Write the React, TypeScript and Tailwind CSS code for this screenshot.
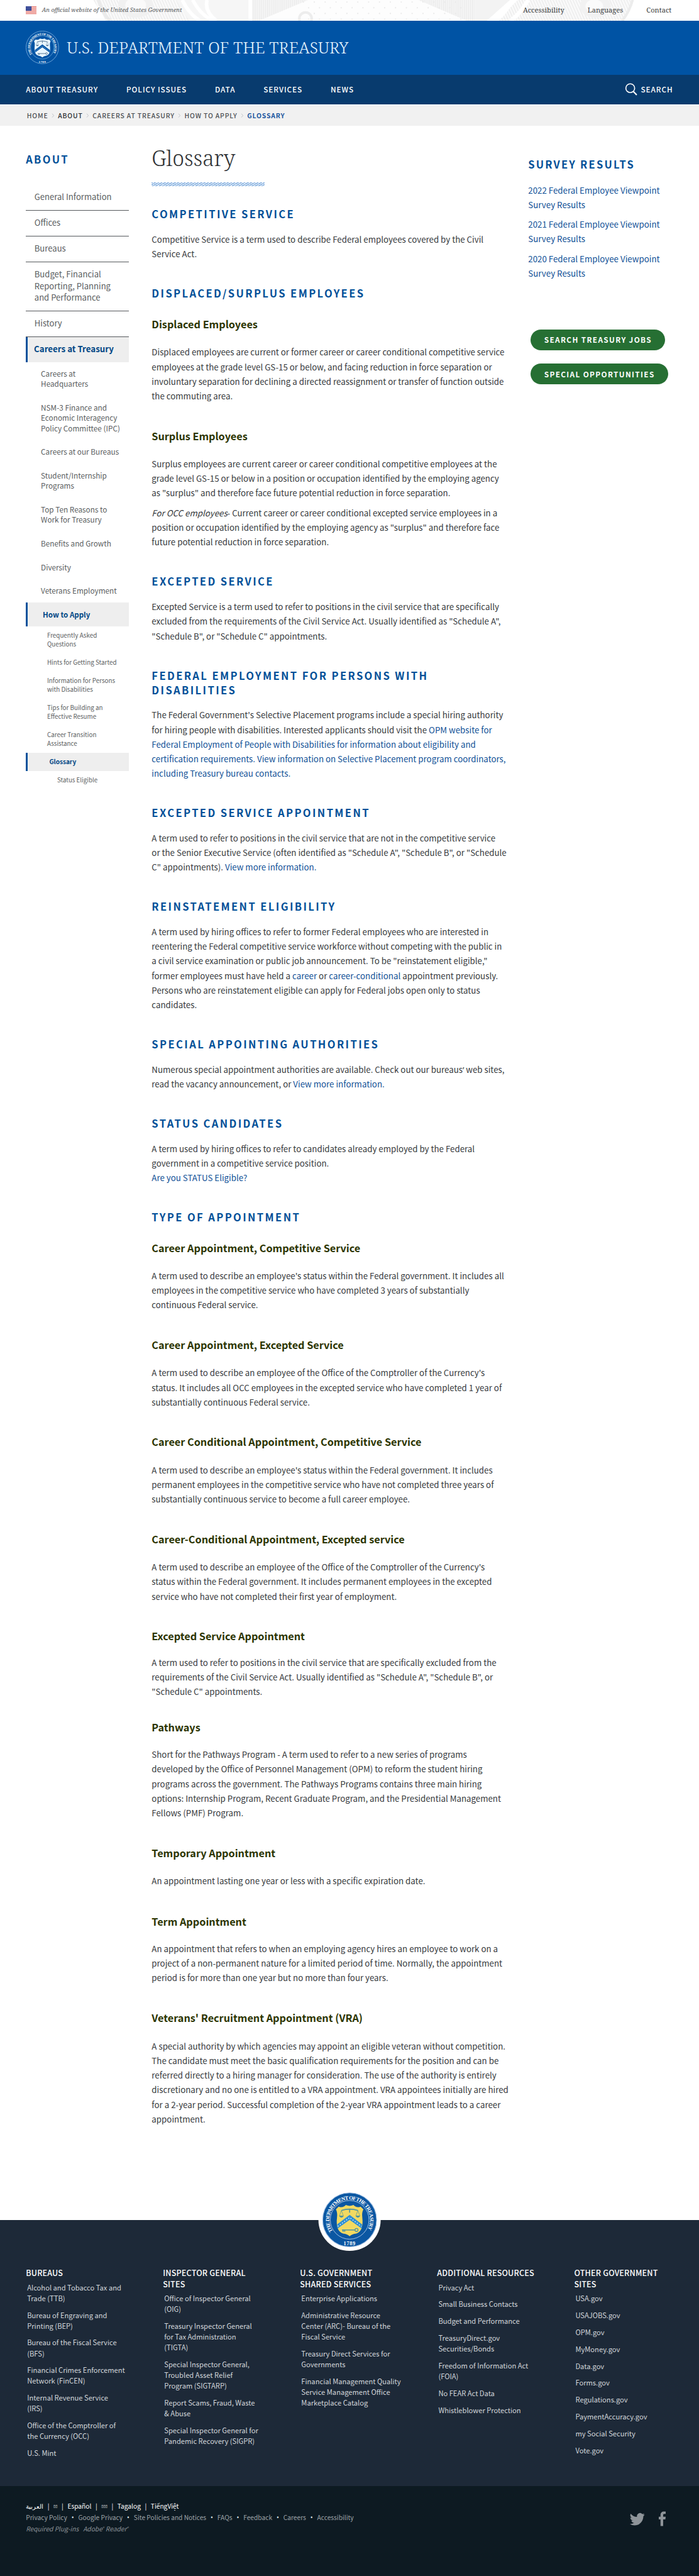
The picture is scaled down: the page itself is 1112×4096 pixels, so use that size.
import { Fragment, type ReactNode } from 'react';

const SERIF = "font-['Noto_Serif','Liberation_Serif',serif]";

function Link({ children }: { children: ReactNode }) {
  return <a className="text-[#0f5096]">{children}</a>;
}

type Block = { kind: 'h2' | 'h3' | 'p'; gap: string; body: ReactNode };

const GAP_P_H2 = 'mt-[48.3px]';
const GAP_H2_P = 'mt-[20.4px]';
const GAP_H2_H3 = 'mt-[33.4px]';
const GAP_H3_P = 'mt-[27.5px]';
const GAP_P_H3 = 'mt-[51.6px]';

const BLOCKS: Block[] = [
  { kind: 'h2', gap: 'mt-[40px]', body: 'Competitive Service' },
  { kind: 'p', gap: GAP_H2_P, body: 'Competitive Service is a term used to describe Federal employees covered by the Civil\nService Act.' },
  { kind: 'h2', gap: GAP_P_H2, body: 'Displaced/Surplus Employees' },
  { kind: 'h3', gap: GAP_H2_H3, body: 'Displaced Employees' },
  { kind: 'p', gap: GAP_H3_P, body: 'Displaced employees are current or former career or career conditional competitive service\nemployees at the grade level GS-15 or below, and facing reduction in force separation or\ninvoluntary separation for declining a directed reassignment or transfer of function outside\nthe commuting area.' },
  { kind: 'h3', gap: GAP_P_H3, body: 'Surplus Employees' },
  { kind: 'p', gap: GAP_H3_P, body: 'Surplus employees are current career or career conditional competitive employees at the\ngrade level GS-15 or below in a position or occupation identified by the employing agency\nas "surplus" and therefore face future potential reduction in force separation.' },
  { kind: 'p', gap: 'mt-[10.4px]', body: <><em>For OCC employees</em>{'- Current career or career conditional excepted service employees in a\nposition or occupation identified by the employing agency as "surplus" and therefore face\nfuture potential reduction in force separation.'}</> },
  { kind: 'h2', gap: GAP_P_H2, body: 'Excepted Service' },
  { kind: 'p', gap: GAP_H2_P, body: 'Excepted Service is a term used to refer to positions in the civil service that are specifically\nexcluded from the requirements of the Civil Service Act. Usually identified as "Schedule A",\n"Schedule B", or "Schedule C" appointments.' },
  { kind: 'h2', gap: GAP_P_H2, body: 'Federal Employment for Persons with\nDisabilities' },
  { kind: 'p', gap: GAP_H2_P, body: <>{"The Federal Government's Selective Placement programs include a special hiring authority\nfor hiring people with disabilities. Interested applicants should visit the "}<Link>{'OPM website for\nFederal Employment of People with Disabilities for information about eligibility and\ncertification requirements.'}</Link> <Link>{'View information on Selective Placement program coordinators,\nincluding Treasury bureau contacts.'}</Link></> },
  { kind: 'h2', gap: GAP_P_H2, body: 'Excepted Service Appointment' },
  { kind: 'p', gap: GAP_H2_P, body: <>{'A term used to refer to positions in the civil service that are not in the competitive service\nor the Senior Executive Service (often identified as "Schedule A", "Schedule B", or "Schedule\nC" appointments). '}<Link>View more information.</Link></> },
  { kind: 'h2', gap: GAP_P_H2, body: 'Reinstatement Eligibility' },
  { kind: 'p', gap: GAP_H2_P, body: <>{'A term used by hiring offices to refer to former Federal employees who are interested in\nreentering the Federal competitive service workforce without competing with the public in\na civil service examination or public job announcement. To be "reinstatement eligible,"\nformer employees must have held a '}<Link>career</Link> or <Link>career-conditional</Link>{' appointment previously.\nPersons who are reinstatement eligible can apply for Federal jobs open only to status\ncandidates.'}</> },
  { kind: 'h2', gap: GAP_P_H2, body: 'Special Appointing Authorities' },
  { kind: 'p', gap: GAP_H2_P, body: <>Numerous special appointment authorities are available. Check out our bureaus<span className="font-['Noto_Sans',sans-serif] leading-none">’</span>{' web sites,\nread the vacancy announcement, or '}<Link>View more information.</Link></> },
  { kind: 'h2', gap: GAP_P_H2, body: 'Status Candidates' },
  { kind: 'p', gap: GAP_H2_P, body: <>{'A term used by hiring offices to refer to candidates already employed by the Federal\ngovernment in a competitive service position.\n'}<Link>Are you STATUS Eligible?</Link></> },
  { kind: 'h2', gap: GAP_P_H2, body: 'Type of Appointment' },
  { kind: 'h3', gap: GAP_H2_H3, body: 'Career Appointment, Competitive Service' },
  { kind: 'p', gap: GAP_H3_P, body: "A term used to describe an employee's status within the Federal government. It includes all\nemployees in the competitive service who have completed 3 years of substantially\ncontinuous Federal service." },
  { kind: 'h3', gap: GAP_P_H3, body: 'Career Appointment, Excepted Service' },
  { kind: 'p', gap: GAP_H3_P, body: "A term used to describe an employee of the Office of the Comptroller of the Currency's\nstatus. It includes all OCC employees in the excepted service who have completed 1 year of\nsubstantially continuous Federal service." },
  { kind: 'h3', gap: GAP_P_H3, body: 'Career Conditional Appointment, Competitive Service' },
  { kind: 'p', gap: GAP_H3_P, body: "A term used to describe an employee's status within the Federal government. It includes\npermanent employees in the competitive service who have not completed three years of\nsubstantially continuous service to become a full career employee." },
  { kind: 'h3', gap: GAP_P_H3, body: 'Career-Conditional Appointment, Excepted service' },
  { kind: 'p', gap: GAP_H3_P, body: "A term used to describe an employee of the Office of the Comptroller of the Currency's\nstatus within the Federal government. It includes permanent employees in the excepted\nservice who have not completed their first year of employment." },
  { kind: 'h3', gap: GAP_P_H3, body: 'Excepted Service Appointment' },
  { kind: 'p', gap: 'mt-[24.2px]', body: 'A term used to refer to positions in the civil service that are specifically excluded from the\nrequirements of the Civil Service Act. Usually identified as "Schedule A", "Schedule B", or\n"Schedule C" appointments.' },
  { kind: 'h3', gap: 'mt-[43px]', body: 'Pathways' },
  { kind: 'p', gap: 'mt-[26.2px]', body: 'Short for the Pathways Program - A term used to refer to a new series of programs\ndeveloped by the Office of Personnel Management (OPM) to reform the student hiring\nprograms across the government. The Pathways Programs contains three main hiring\noptions: Internship Program, Recent Graduate Program, and the Presidential Management\nFellows (PMF) Program.' },
  { kind: 'h3', gap: GAP_P_H3, body: 'Temporary Appointment' },
  { kind: 'p', gap: GAP_H3_P, body: 'An appointment lasting one year or less with a specific expiration date.' },
  { kind: 'h3', gap: 'mt-[52.6px]', body: 'Term Appointment' },
  { kind: 'p', gap: 'mt-[26.5px]', body: 'An appointment that refers to when an employing agency hires an employee to work on a\nproject of a non-permanent nature for a limited period of time. Normally, the appointment\nperiod is for more than one year but no more than four years.' },
  { kind: 'h3', gap: 'mt-[52px]', body: "Veterans' Recruitment Appointment (VRA)" },
  { kind: 'p', gap: GAP_H3_P, body: 'A special authority by which agencies may appoint an eligible veteran without competition.\nThe candidate must meet the basic qualification requirements for the position and can be\nreferred directly to a hiring manager for consideration. The use of the authority is entirely\ndiscretionary and no one is entitled to a VRA appointment. VRA appointees initially are hired\nfor a 2-year period. Successful completion of the 2-year VRA appointment leads to a career\nappointment.' },
];

const BLOCK_STYLE = {
  h2: 'text-[20.1px] leading-[28px] font-bold uppercase tracking-[2.9px] text-[#004f98]',
  h3: 'text-[19.7px] leading-[24px] font-bold text-[#2b3400]',
  p: 'text-[16.15px] leading-[28.12px] text-[#36393c]',
};

function Article() {
  return (
    <article className="whitespace-pre">
      {BLOCKS.map((b, i) => {
        const Tag = b.kind;
        return (
          <Tag key={i} className={`${b.gap} ${BLOCK_STYLE[b.kind]}`}>
            {b.body}
          </Tag>
        );
      })}
    </article>
  );
}

function Flag() {
  return (
    <svg viewBox="0 0 21 15" className="h-[15px] w-[21px]">
      <rect width="21" height="15" fill="#fff" />
      {[0, 1, 2, 3, 4, 5, 6].map((n) => (
        <rect key={n} y={n * 2.3} width="21" height="1.15" fill="#e0584f" />
      ))}
      <rect width="11" height="8.6" fill="#2a3c8e" />
      {[1.5, 4, 6.5, 9].map((x) =>
        [1.5, 4, 6.5].map((y) => <circle key={`${x}-${y}`} cx={x} cy={y} r="0.55" fill="#dfe4f5" />),
      )}
    </svg>
  );
}

/* Faint banknote engraving behind the top strip. */
function Engraving() {
  const dots: ReactNode[] = [];
  for (let r = 0; r < 4; r++)
    for (let c = 0; c < 15; c++)
      dots.push(<circle key={`${r}-${c}`} cx={586 + c * 21 + (r % 2) * 10} cy={4 + r * 11} r="1.3" fill="#e9e9e9" />);
  return (
    <svg viewBox="0 0 1350 40" className="absolute inset-0 h-[40px] w-full">
      <defs>
        <pattern id="vlines" width="4" height="4" patternUnits="userSpaceOnUse">
          <rect width="4" height="4" fill="#f5f5f5" />
          <rect width="1.5" height="4" fill="#ebebeb" />
        </pattern>
        <pattern id="dlines" width="5" height="5" patternUnits="userSpaceOnUse" patternTransform="rotate(-24)">
          <rect width="5" height="5" fill="#fafafa" />
          <rect width="1.8" height="5" fill="#ededed" />
        </pattern>
      </defs>
      <path d="M180 0H345L380 40H205Z" fill="url(#dlines)" />
      <path d="M340 0H480V40H365Z" fill="#f6f6f6" />
      <path d="M352 0q12 26 34 40M372 0q16 30 40 40M400 0q-6 22 18 40" stroke="#fff" strokeWidth="7" fill="none" />
      <ellipse cx="262" cy="10" rx="34" ry="24" fill="#f1f1f1" />
      <ellipse cx="262" cy="10" rx="20" ry="15" fill="#fafafa" />
      <path d="M190 0q6 22 22 40" stroke="#ebebeb" strokeWidth="6" fill="none" />
      <rect x="487" y="0" width="430" height="40" fill="url(#vlines)" />
      <path d="M595 0H808L902 40H500Z" fill="#fdfdfd" />
      {dots}
      <circle cx="590" cy="36" r="12" fill="none" stroke="#ededed" strokeWidth="5" />
      <path d="M917 0H985L940 40H917Z" fill="#f3f3f3" />
      <path d="M1000 0H1225L1200 40H960Z" fill="url(#dlines)" />
      <path d="M990 0q-14 24 -32 40M1020 0q-14 26 -34 40" stroke="#fff" strokeWidth="8" fill="none" />
      <ellipse cx="1150" cy="12" rx="30" ry="22" fill="#f2f2f2" />
      <ellipse cx="1148" cy="12" rx="17" ry="13" fill="#fbfbfb" />
      <path d="M1222 0q-6 22 -20 40" stroke="#ececec" strokeWidth="5" fill="none" />
    </svg>
  );
}

const SHIELD = 'M30 33Q38 36 43 30Q50 33 57 30Q62 36 70 33L75 38Q72 44 73 52Q76 78 62 82Q54 83 50 87Q46 83 38 82Q24 78 27 52Q28 44 25 38Z';

function Seal({ id, size, ring, shield, chevron, ink, rim, stars }: { id: string; size: string; ring: string; shield: string; chevron: string; ink: string; rim: string; stars: string }) {
  return (
    <svg viewBox="0 0 100 100" className={size}>
      <defs>
        <path id={id} d="M19.4 70.9A37 37 0 1 1 80.6 70.9" />
      </defs>
      <circle cx="50" cy="50" r="49.2" fill={ring} stroke={rim} strokeWidth="1.3" />
      <circle cx="50" cy="50" r="35.2" fill={ring} stroke={rim} strokeWidth="1.1" />
      <g transform="translate(0 -7)">
        <path d={SHIELD} fill={shield} />
        <path d="M27.5 65L50 48L72.5 65V73L50 57L27.5 73Z" fill={chevron} />
        <path d="M28.5 69L50 53L71.5 69" fill="none" stroke={stars} strokeWidth="1.8" strokeDasharray="1.8 3" />
        <path d="M35 40Q50 35 65 40M50 37V44" fill="none" stroke={ink} strokeWidth="1.8" />
        <path d="M35 40L31.5 49.5M35 40L38.5 49.5M65 40L61.5 49.5M65 40L68.5 49.5" stroke={ink} strokeWidth="0.8" />
        <path d="M30.8 49.5H39.2Q38 53 35 53T30.8 49.5ZM60.8 49.5H69.2Q68 53 65 53T60.8 49.5Z" fill={ink} />
        <path d="M36 75.5H60M38 76V79M41 76V79" stroke={ink} strokeWidth="1.8" />
        <circle cx="62.5" cy="75.5" r="2.8" fill="none" stroke={ink} strokeWidth="1.5" />
      </g>
      <text className="font-['Liberation_Serif',serif] text-[9.6px] font-bold" fill="#fff">
        <textPath href={`#${id}`} textLength="156" startOffset="0">THE DEPARTMENT OF THE TREASURY</textPath>
      </text>
      <text x="50" y="96" textAnchor="middle" className="font-['Liberation_Serif',serif] text-[9.5px] font-bold tracking-[0.8px]" fill="#fff">1789</text>
    </svg>
  );
}

const NAV = ['About Treasury', 'Policy Issues', 'Data', 'Services', 'News'];
const CRUMBS = ['Home', 'About', 'Careers at Treasury', 'How to Apply'];

function Header() {
  return (
    <header>
      <div className="relative h-[40px] bg-white">
        <Engraving />
        <div className={`relative flex h-full items-center justify-between pl-[50px] pr-[53px] ${SERIF}`}>
          <div className="flex items-center gap-[10px]">
            <Flag />
            <span className="w-[271px] whitespace-nowrap text-[11.4px] italic text-[#55585b]">An official website of the United States Government</span>
          </div>
          <div className="flex gap-[45px] text-[13.5px] text-[#3a3d40]">
            <span>Accessibility</span>
            <span>Languages</span>
            <span>Contact</span>
          </div>
        </div>
      </div>
      <div className="flex h-[104px] items-center gap-[15px] bg-[#0053a4] pl-[50px]">
        <Seal id="seal-top" size="h-[64px] w-[64px]" ring="#0053a4" shield="#e9f6ff" chevron="#0053a4" ink="#4f6f8c" rim="#9cc7ee" stars="#b9dcf8" />
        <span className={`text-[31.2px] font-light leading-none text-[#e6f5ff] ${SERIF}`}>U.S. DEPARTMENT OF THE TREASURY</span>
      </div>
      <nav className="flex h-[57.5px] items-center justify-between bg-[#083b6e] pl-[50px] pr-[50px] text-[14.3px] font-medium uppercase tracking-[1.15px] text-white">
        <div className="flex gap-[54.4px]">
          {NAV.map((n) => (
            <span key={n}>{n}</span>
          ))}
        </div>
        <div className="flex items-center gap-[7px]">
          <svg viewBox="0 0 24 24" className="h-[24px] w-[24px]" fill="none" stroke="#fff" strokeWidth="2">
            <circle cx="10.5" cy="10" r="8.5" />
            <path d="M16.5 16.5L23 23" strokeWidth="2.6" />
          </svg>
          <span>Search</span>
        </div>
      </nav>
      <div className="mt-[2px] flex h-[39.5px] items-center gap-[6.5px] bg-[#f1f1f1] pl-[52px] text-[12.6px] font-medium uppercase tracking-[1.05px] text-[#4b4e52]">
        {CRUMBS.map((c) => (
          <Fragment key={c}>
            <span className={c === 'About' ? 'text-[#2c2f33]' : undefined}>{c}</span>
            <svg viewBox="0 0 6 10" className="h-[9px] w-[6px]" fill="none" stroke="#bfc3c8" strokeWidth="1.3">
              <path d="M1 1L4.5 5L1 9" />
            </svg>
          </Fragment>
        ))}
        <span className="font-bold text-[#1c56a0]">Glossary</span>
      </div>
    </header>
  );
}

const TOP_ITEMS = ['General Information', 'Offices', 'Bureaus', 'Budget, Financial\nReporting, Planning\nand Performance', 'History'];
const SUB_ITEMS = ['Careers at\nHeadquarters', 'NSM-3 Finance and\nEconomic Interagency\nPolicy Committee (IPC)', 'Careers at our Bureaus', 'Student/Internship\nPrograms', 'Top Ten Reasons to\nWork for Treasury', 'Benefits and Growth', 'Diversity', 'Veterans Employment'];
const APPLY_ITEMS = ['Frequently Asked\nQuestions', 'Hints for Getting Started', 'Information for Persons\nwith Disabilities', 'Tips for Building an\nEffective Resume', 'Career Transition\nAssistance'];

function Sidebar() {
  return (
    <aside className="w-[199px] shrink-0 whitespace-pre pt-[51px] text-[#5a5d60]">
      <h2 className="text-[20px] font-bold leading-[28px] tracking-[2.85px] text-[#004f98]">ABOUT</h2>
      <ul className="mt-[35px] text-[15.9px] leading-[22.88px]">
        {TOP_ITEMS.map((t) => (
          <li key={t} className="border-b border-[#55585c] pb-[13.1px] pl-[16.5px] pt-[12.4px]">{t}</li>
        ))}
        <li className="h-[48.5px] border-l-[4px] border-[#00529c] bg-[#eeeeee] pl-[12px] pt-[12.4px] text-[16.2px] font-bold text-[#004785]">Careers at Treasury</li>
      </ul>
      <ul className="text-[14.3px] leading-[20px]">
        {SUB_ITEMS.map((t) => (
          <li key={t} className="pb-[13.2px] pl-[29px] pt-[12.4px]">{t}</li>
        ))}
        <li className="h-[45.5px] border-l-[4px] border-[#00529c] bg-[#eeeeee] pl-[29px] pt-[12.4px] text-[14px] font-bold text-[#004785]">How to Apply</li>
      </ul>
      <ul className="text-[11.95px] leading-[17.1px]">
        {APPLY_ITEMS.map((t) => (
          <li key={t} className="pb-[9.2px] pl-[41px] pt-[8.8px]">{t}</li>
        ))}
        <li className="h-[35px] border-l-[4px] border-[#00529c] bg-[#eeeeee] pl-[41.5px] pt-[8.8px] text-[12.2px] font-bold text-[#004785]">Glossary</li>
        <li className="pl-[60.5px] pt-[8.8px] text-[11.8px]">Status Eligible</li>
      </ul>
    </aside>
  );
}

function RightRail() {
  return (
    <aside className="w-[285px] shrink-0 whitespace-pre pt-[60.4px]">
      <h2 className="text-[20px] font-bold leading-[28px] tracking-[2.7px] text-[#004f98]">SURVEY RESULTS</h2>
      <div className="mt-[22px] flex flex-col gap-[10px] text-[16.2px] leading-[28px]">
        {['2022', '2021', '2020'].map((y) => (
          <p key={y}>
            <Link>{`${y} Federal Employee Viewpoint\nSurvey Results`}</Link>
          </p>
        ))}
      </div>
      <div className="mt-[94.6px] flex flex-col items-start gap-[26px] pl-[4px]">
        {['SEARCH TREASURY JOBS', 'SPECIAL OPPORTUNITIES'].map((t) => (
          <button key={t} className="h-[40px] rounded-full bg-[#266f33] pl-[27px] pr-[26px] text-[14.3px] font-bold tracking-[1.65px] text-white">{t}</button>
        ))}
      </div>
    </aside>
  );
}

const FOOTER = [
  { w: 'w-[264.7px]', title: 'BUREAUS', items: ['Alcohol and Tobacco Tax and\nTrade (TTB)', 'Bureau of Engraving and\nPrinting (BEP)', 'Bureau of the Fiscal Service\n(BFS)', 'Financial Crimes Enforcement\nNetwork (FinCEN)', 'Internal Revenue Service\n(IRS)', 'Office of the Comptroller of\nthe Currency (OCC)', 'U.S. Mint'] },
  { w: 'w-[264.7px]', title: 'INSPECTOR GENERAL\nSITES', items: ['Office of Inspector General\n(OIG)', 'Treasury Inspector General\nfor Tax Administration\n(TIGTA)', 'Special Inspector General,\nTroubled Asset Relief\nProgram (SIGTARP)', 'Report Scams, Fraud, Waste\n& Abuse', 'Special Inspector General for\nPandemic Recovery (SIGPR)'] },
  { w: 'w-[264.7px]', title: 'U.S. GOVERNMENT\nSHARED SERVICES', items: ['Enterprise Applications', 'Administrative Resource\nCenter (ARC)- Bureau of the\nFiscal Service', 'Treasury Direct Services for\nGovernments', 'Financial Management Quality\nService Management Office\nMarketplace Catalog'] },
  { w: 'w-[264.7px]', title: 'ADDITIONAL RESOURCES', items: ['Privacy Act', 'Small Business Contacts', 'Budget and Performance', 'TreasuryDirect.gov\nSecurities/Bonds', 'Freedom of Information Act\n(FOIA)', 'No FEAR Act Data', 'Whistleblower Protection'] },
  { w: 'w-[200px]', title: 'OTHER GOVERNMENT\nSITES', items: ['USA.gov', 'USAJOBS.gov', 'OPM.gov', 'MyMoney.gov', 'Data.gov', 'Forms.gov', 'Regulations.gov', 'PaymentAccuracy.gov', 'my Social Security', 'Vote.gov'] },
];

const LANGS = ['العربية', '▯▯', 'Español', '▯▯▯', 'Tagalog', 'TiếngViệt'];
const POLICIES = ['Privacy Policy', 'Google Privacy', 'Site Policies and Notices', 'FAQs', 'Feedback', 'Careers', 'Accessibility'];

function Footer() {
  return (
    <footer className="whitespace-pre">
      <div className="relative h-[513px] bg-[#1d2938] pl-[50px] pt-[91.5px]">
        <div className="absolute -top-[60px] left-1/2 flex h-[120px] w-[120px] -translate-x-1/2 items-center justify-center rounded-full bg-white">
          <Seal id="seal-footer" size="h-[106px] w-[106px]" ring="#0b57a2" shield="#f2d961" chevron="#2f8fd3" ink="#4d93a0" rim="#a9c4e4" stars="#d8efff" />
        </div>
        <div className="flex">
          {FOOTER.map((c) => (
            <div key={c.title} className={`${c.w} shrink-0`}>
              <h3 className="text-[15.3px] font-medium leading-[21px] tracking-[0.2px] text-white">{c.title}</h3>
              <ul className="mt-[7.2px] flex flex-col gap-[12px] pl-[2.5px] text-[13.55px] leading-[20.7px] text-[#d3d7db]">
                {c.items.map((t) => (
                  <li key={t}>{t}</li>
                ))}
              </ul>
            </div>
          ))}
        </div>
      </div>
      <div className="flex h-[174px] justify-between bg-[#0d1a22] pl-[50px] pr-[64px] pt-[28px]">
        <div className="text-[12.4px] leading-[22px]">
          <div className="flex text-white">
            {LANGS.map((l, i) => (
              <Fragment key={l}>
                {i > 0 && <span className="px-[8px]">|</span>}
                <span className={l.startsWith('▯') ? "font-['DejaVu_Sans',sans-serif] text-[7px]" : undefined}>{l}</span>
              </Fragment>
            ))}
          </div>
          <div className="flex text-[#9da3a8]">
            {POLICIES.map((l, i) => (
              <Fragment key={l}>
                {i > 0 && <span className="w-[21.5px] text-center font-['Noto_Sans',sans-serif] text-[#dfe2e4]">•</span>}
                <span>{l}</span>
              </Fragment>
            ))}
          </div>
          <div className="italic text-[#8b9196]">
            Required Plug-ins{'  '} Adobe<sup className="text-[7px]">®</sup> Reader<sup className="text-[7px]">®</sup>
          </div>
        </div>
        <div className="flex gap-[26px] pt-[21px]">
          <svg viewBox="0 0 24 24" className="h-[30px] w-[29px]" fill="#8e9499">
            <path d="M23.6 4.9c-.9.4-1.8.6-2.8.8 1-.6 1.8-1.6 2.2-2.7-1 .6-2 1-3.1 1.2a4.9 4.9 0 0 0-8.4 4.5A13.9 13.9 0 0 1 1.4 3.6a4.9 4.9 0 0 0 1.5 6.6c-.8 0-1.6-.2-2.2-.6v.1c0 2.3 1.7 4.3 3.9 4.8a4.9 4.9 0 0 1-2.2.1 4.9 4.9 0 0 0 4.6 3.4A9.9 9.9 0 0 1 0 20a13.9 13.9 0 0 0 7.5 2.2c9.1 0 14-7.5 14-14v-.6c1-.7 1.8-1.6 2.1-2.7z" />
          </svg>
          <svg viewBox="0 0 14 28" className="h-[29px] w-[14px]" fill="#8e9499">
            <path d="M13.5.2v4.5h-2.6c-2 0-2.4 1-2.4 2.4v3.1h4.9l-.7 5h-4.2V28H3.4V15.2H0v-5h3.4V6.6C3.400 2.300 6 0 9.800 0c1.800 0 3.200.1 3.700.2z" />
          </svg>
        </div>
      </div>
    </footer>
  );
}

export default function App() {
  return (
    <div className="w-[1349.8px] overflow-hidden bg-white font-['Noto_Sans_CJK_SC','Noto_Sans',sans-serif] [zoom:0.8238]">
      <Header />
      <div className="flex h-[4042px] pl-[50px]">
        <Sidebar />
        <main className="ml-[44px] w-[727px] shrink-0 pt-[37px]">
          <h1 className={`h-[50px] text-[41.2px] font-light leading-[50px] text-[#2f3235] ${SERIF}`}>Glossary</h1>
          <div className="mt-[22px] h-[8px] w-[218px] bg-[repeating-linear-gradient(150deg,#7fabdc_0px,#7fabdc_1.5px,#e3eefa_1.5px,#e3eefa_3.2px)]" />
          <Article />
        </main>
        <RightRail />
      </div>
      <Footer />
    </div>
  );
}
